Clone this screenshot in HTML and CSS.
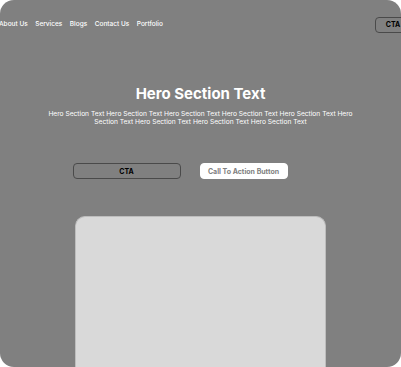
FILE: index.html
```html
<!DOCTYPE html>
<html lang="en">
  <head>
    <meta charset="UTF-8" />
    <meta name="viewport" content="width=device-width, initial-scale=1.0" />
    <title>Landing</title>
    <link rel="stylesheet" href="styles.css">
  </head>
  <body>
    <div class="page">
      <nav class="nav">
        <div class="links">
          <a href="#">About Us</a>
          <a href="#">Services</a>
          <a href="#">Blogs</a>
          <a href="#">Contact Us</a>
          <a href="#">Portfolio</a>
        </div>
        <button class="btn-outline nav-cta">CTA</button>
      </nav>

      <section class="hero">
        <h1>Hero Section Text</h1>
        <p>
          Hero Section Text Hero Section Text Hero Section Text Hero Section Text Hero Section Text Hero
          Section Text Hero Section Text Hero Section Text Hero Section Text
        </p>
        <div class="actions">
          <button class="btn-outline wide">CTA</button>
          <button class="btn-white">Call To Action Button</button>
        </div>
      </section>

      <div class="card"></div>
    </div>
  </body>
</html>
```

FILE: styles.css
```css
body {
  margin: 0;
  background-color: #ffffff;
  font-family: Inter, "Noto Sans", sans-serif;
}
.page {
  height: 367px;
  background-color: #808080;
  border-radius: 14px;
  overflow: hidden;
  display: flex;
  flex-direction: column;
}
.nav {
  display: flex;
  justify-content: space-between;
  align-items: center;
  margin: 16px -10px 0 -1px;
}
.links {
  display: flex;
  gap: 7.5px;
}
.links a {
  color: #ffffff;
  text-decoration: none;
  font-size: 6.5px;
  font-weight: 500;
  line-height: 17px;
}
button {
  font-family: inherit;
  font-size: 7px;
  font-weight: 700;
  border-radius: 4px;
  cursor: pointer;
  padding: 0;
  height: 16px;
}
.btn-outline {
  background-color: #808080;
  border: 1px solid #4a4a4a;
  color: #000000;
}
.nav-cta {
  width: 36px;
}
.hero {
  text-align: center;
  color: #ffffff;
  margin-top: 52px;
}
.hero h1 {
  font-size: 15px;
  font-weight: 700;
  line-height: 18px;
  margin: 0;
}
.hero p {
  font-size: 6.65px;
  line-height: 8px;
  margin: 7px 40px 0;
}
.actions {
  display: flex;
  justify-content: center;
  gap: 19px;
  margin-top: 37px;
}
.wide {
  width: 108px;
  margin-left: -41px;
}
.btn-white {
  width: 88px;
  background-color: #ffffff;
  border: 1px solid #ffffff;
  color: #808080;
}
.card {
  align-self: center;
  width: 249px;
  height: 200px;
  margin-top: 37px;
  background-color: #d9d9d9;
  border-radius: 10px;
  border: 1px solid #bdbdbd;
  border-bottom: none;
  flex-shrink: 0;
}
```
